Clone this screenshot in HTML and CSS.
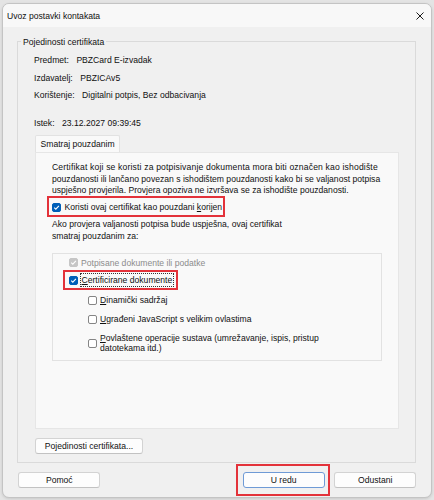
FILE: index.html
```html
<!DOCTYPE html>
<html lang="hr">
<head>
<meta charset="utf-8">
<title>Uvoz postavki kontakata</title>
<link rel="stylesheet" href="styles.css">
</head>
<body>
<div class="window">
  <div class="titlebar">
    <span class="title">Uvoz postavki kontakata</span>
    <span class="close"><svg width="8" height="8" viewBox="0 0 8 8"><path d="M0.5 0.5 L7.5 7.5 M7.5 0.5 L0.5 7.5" stroke="#1b1b1b" stroke-width="1" fill="none"/></svg></span>
  </div>
  <div class="content">
    <div class="group">
      <div class="legend">Pojedinosti certifikata</div>
      <div class="info">
        <div class="info-row"><span class="lbl">Predmet:</span><span>PBZCard E-izvadak</span></div>
        <div class="info-row"><span class="lbl">Izdavatelj:</span><span>PBZICAv5</span></div>
        <div class="info-row"><span class="lbl">Korištenje:</span><span>Digitalni potpis, Bez odbacivanja</span></div>
        <div class="info-row expiry"><span class="lbl">Istek:</span><span>23.12.2027 09:39:45</span></div>
      </div>
      <div class="tabs">
        <div class="tab">Smatraj pouzdanim</div>
        <div class="panel">
          <p class="desc"><span class="wide-line">Certifikat koji se koristi za potpisivanje dokumenta mora biti označen kao ishodište</span><br>pouzdanosti ili lančano povezan s ishodištem pouzdanosti kako bi se valjanost potpisa<br>uspješno provjerila. Provjera opoziva ne izvršava se za ishodište pouzdanosti.</p>
          <div class="check-row root-row hl hl-root">
            <span class="cb checked"><svg width="9" height="9" viewBox="0 0 9 9"><path d="M2.2 4.7 L3.8 6.2 L6.9 2.9" stroke="#fff" stroke-width="1.1" fill="none"/></svg></span>
            <span>Koristi ovaj certifikat kao pouzdani <u>k</u>orijen</span>
          </div>
          <p class="desc2">Ako provjera valjanosti potpisa bude uspješna, ovaj certifikat<br>smatraj pouzdanim za:</p>
          <div class="inner-group">
            <div class="check-row disabled-row">
              <span class="cb disabled"><svg width="9" height="9" viewBox="0 0 9 9"><path d="M2.2 4.7 L3.8 6.2 L6.9 2.9" stroke="#fff" stroke-width="1.1" fill="none"/></svg></span>
              <span>Potpisane dokumente ili podatke</span>
            </div>
            <div class="check-row cert-row hl hl-cert">
              <span class="cb checked"><svg width="9" height="9" viewBox="0 0 9 9"><path d="M2.2 4.7 L3.8 6.2 L6.9 2.9" stroke="#fff" stroke-width="1.1" fill="none"/></svg></span>
              <span class="focus"><u>C</u>ertificirane dokumente</span>
            </div>
            <div class="check-row sub-row">
              <span class="cb"></span>
              <span><u>D</u>inamički sadržaj</span>
            </div>
            <div class="check-row sub-row">
              <span class="cb"></span>
              <span><u>U</u>građeni JavaScript s velikim ovlastima</span>
            </div>
            <div class="check-row sub-row multi">
              <span class="cb"></span>
              <span><u>P</u>ovlaštene operacije sustava (umrežavanje, ispis, pristup<br>datotekama itd.)</span>
            </div>
          </div>
        </div>
      </div>
      <div class="details-row"><button class="btn details-btn">Pojedinosti certifikata...</button></div>
    </div>
    <div class="footer">
      <button class="btn">Pomoć</button>
      <span class="ok-wrap hl hl-ok"><button class="btn default">U redu</button></span>
      <button class="btn">Odustani</button>
    </div>
  </div>
</div>
</body>
</html>
```

FILE: styles.css
```css
*, *::before, *::after { box-sizing: border-box; }
html, body { margin: 0; padding: 0; }
body {
  background: #e4e4e4;
  font-family: "Liberation Sans", Arial, sans-serif;
  font-size: 8.6px;
  color: #111;
  width: 434px;
  height: 500px;
  overflow: hidden;
}
.window {
  margin: 3px 2px 0 2px;
  width: 430px;
  height: 495px;
  border: 1px solid #c4c4c4;
  border-radius: 7px;
  background: #f0f0f0;
  overflow: hidden;
  box-shadow: 0 1px 3px rgba(0,0,0,0.12);
}
.titlebar {
  height: 23px;
  background: #f8f8f8;
  display: flex;
  align-items: center;
  justify-content: space-between;
  padding: 0 7px 0 4px;
}
.title { line-height: 12px; white-space: nowrap; }
.close { display: flex; width: 8px; height: 8px; }
.content { display: flex; flex-direction: column; }
.group {
  margin: 14px 0 0 14px;
  width: 399px;
  height: 422px;
  border: 1px solid #dadada;
  display: flex;
  flex-direction: column;
  align-items: flex-start;
}
.legend {
  margin: -6px 0 0 3px;
  padding: 0 2px;
  line-height: 12px;
  background: #f0f0f0;
  white-space: nowrap;
}
.info {
  margin: 6px 0 0 16px;
  display: flex;
  flex-direction: column;
}
.info-row {
  line-height: 12px;
  height: 12px;
  margin-top: 5.5px;
  display: flex;
  gap: 7.5px;
  white-space: nowrap;
}
.info-row:first-child { margin-top: 0; }
.info-row.expiry { margin-top: 16.3px; }
.tabs {
  margin: 5.7px 0 0 17px;
  display: flex;
  flex-direction: column;
  align-items: flex-start;
}
.tab {
  height: 17px;
  line-height: 16px;
  padding: 0 4px 0 4.5px;
  border: 1px solid #e2e2e2;
  border-bottom: none;
  background: #f9f9f9;
  white-space: nowrap;
  border-radius: 2px 2px 0 0;
}
.panel {
  width: 364px;
  height: 277px;
  border: 1px solid #e6e6e6;
  background: #f9f9f9;
  padding: 9.2px 0 0 16px;
  display: flex;
  flex-direction: column;
  align-items: flex-start;
}
.desc {
  margin: 0;
  line-height: 11.5px;
  white-space: nowrap;
}
.wide-line { letter-spacing: 0.16px; }
.check-row {
  display: flex;
  align-items: center;
  gap: 3.5px;
  line-height: 12px;
  white-space: nowrap;
}
.root-row { margin-top: 4.5px; }
.desc2 {
  margin: 5.7px 0 0 0;
  line-height: 11.7px;
  white-space: nowrap;
}
.inner-group {
  margin-top: 10.9px;
  width: 330px;
  height: 108px;
  border: 1px solid #e2e2e2;
  padding: 2.7px 0 0 15.5px;
  display: flex;
  flex-direction: column;
  align-items: flex-start;
}
.disabled-row { color: #8c8c8c; }
.cert-row { margin-top: 5.3px; }
.sub-row { margin-left: 19px; margin-top: 8px; }
.sub-row + .sub-row { margin-top: 7.3px; }
.sub-row.multi { margin-top: 7.5px; line-height: 10.5px; }
.cb {
  flex: none;
  width: 9px;
  height: 9px;
  border-radius: 2px;
  border: 1px solid #858585;
  background: #fff;
  display: flex;
  align-items: center;
  justify-content: center;
}
.cb svg { display: block; flex: none; }
.cb.checked { background: #005fb8; border-color: #005fb8; }
.cb.disabled { background: #c6c6c6; border-color: #c6c6c6; }
.focus { outline: 1px dotted #333; outline-offset: 0; padding: 0 1px 0 0.5px; }
u { text-decoration: underline; text-underline-offset: 1px; }
.hl { position: relative; }
.hl::after {
  content: "";
  position: absolute;
  border: 2px solid #e3323a;
  pointer-events: none;
}
.hl-root::after { left: -5px; top: -5.3px; width: 178px; height: 21px; }
.hl-cert::after { left: -6px; top: -4px; width: 115px; height: 20px; }
.hl-ok::after { left: -6.3px; top: -7.4px; width: 94px; height: 31.5px; }
.details-row { margin: 9.3px 0 0 17px; }
.btn {
  font-family: inherit;
  font-size: 8.6px;
  color: #111;
  height: 16.6px;
  width: 82px;
  padding: 0;
  line-height: 14px;
  background: #fdfdfd;
  border: 1px solid #d3d3d3;
  border-bottom-color: #c2c2c2;
  border-radius: 3px;
  white-space: nowrap;
}
.details-btn { width: 108px; height: 15.8px; }
.btn.default { border-color: #6f9bd6; }
.footer {
  margin-top: 8.7px;
  display: flex;
  align-items: flex-start;
  padding: 0 0 0 15.3px;
}
.ok-wrap { display: flex; margin-left: 142.3px; }
.footer .ok-wrap + .btn { margin-left: 9.7px; }
```
